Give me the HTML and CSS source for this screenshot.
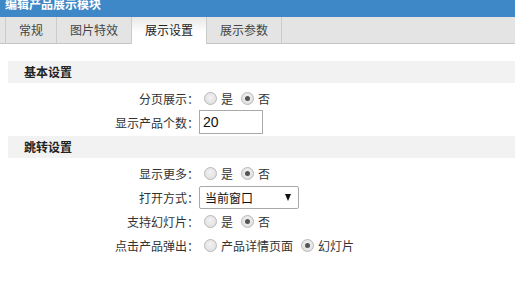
FILE: index.html
```html
<!DOCTYPE html>
<html lang="zh">
<head>
<meta charset="utf-8">
<link rel="stylesheet" href="styles.css">
</head>
<body>
<div class="titlebar"><div class="title">编辑产品展示模块</div></div>
<div class="tabs">
  <div class="tab">常规</div>
  <div class="tab">图片特效</div>
  <div class="tab active">展示设置</div>
  <div class="tab last">展示参数</div>
</div>
<div class="content">
  <div class="sec">基本设置</div>
  <div class="rows">
    <div class="row">
      <div class="label">分页展示：</div>
      <div class="field">
        <span class="radio"></span><span class="opt">是</span>
        <span class="radio on"></span><span class="opt">否</span>
      </div>
    </div>
    <div class="row">
      <div class="label">显示产品个数：</div>
      <div class="field"><div class="input">20</div></div>
    </div>
  </div>
  <div class="sec">跳转设置</div>
  <div class="rows">
    <div class="row">
      <div class="label">显示更多：</div>
      <div class="field">
        <span class="radio"></span><span class="opt">是</span>
        <span class="radio on"></span><span class="opt">否</span>
      </div>
    </div>
    <div class="row">
      <div class="label">打开方式：</div>
      <div class="field"><div class="select"><span>当前窗口</span><span class="arrow"></span></div></div>
    </div>
    <div class="row">
      <div class="label">支持幻灯片：</div>
      <div class="field">
        <span class="radio"></span><span class="opt">是</span>
        <span class="radio on"></span><span class="opt">否</span>
      </div>
    </div>
    <div class="row">
      <div class="label">点击产品弹出：</div>
      <div class="field">
        <span class="radio"></span><span class="opt">产品详情页面</span>
        <span class="radio on"></span><span class="opt">幻灯片</span>
      </div>
    </div>
  </div>
</div>
</body>
</html>
```
FILE: styles.css
```css
* { box-sizing: border-box; }
body {
  margin: 0;
  font-family: "Noto Sans CJK SC", "Microsoft YaHei", sans-serif;
  font-size: 12px;
  color: #333;
  background: #fff;
}
.titlebar {
  height: 17px;
  background: #3f88c7;
  overflow: hidden;
}
.title {
  margin-top: -6px;
  padding-left: 5px;
  line-height: 20px;
  color: #fff;
  font-weight: bold;
  font-size: 12px;
}
.tabs {
  display: flex;
  height: 27px;
  background: #e4e4e4;
  border-bottom: 1px solid #c6c6c6;
  padding-left: 5px;
}
.tab {
  height: 26px;
  line-height: 26px;
  padding: 0 13px;
  border-left: 1px solid #cbcbcb;
  color: #444;
  font-size: 12px;
}
.tab.last { border-right: 1px solid #cbcbcb; }
.tab.active {
  height: 27px;
  background: linear-gradient(#e8e8e8, #ffffff 60%);
  color: #222;
}
.content { padding-top: 17px; }
.sec {
  margin-left: 8px;
  height: 22px;
  line-height: 22px;
  padding-left: 16px;
  background: #f2f2f2;
  font-weight: bold;
  color: #222;
}
.rows { padding: 3px 0 2px; }
.row {
  display: flex;
  align-items: center;
  height: 24px;
}
.label {
  width: 199px;
  text-align: right;
  color: #333;
}
.field {
  display: flex;
  align-items: center;
}
.radio {
  width: 13px;
  height: 13px;
  border-radius: 50%;
  border: 1px solid #b8b8b8;
  background: radial-gradient(circle at 50% 40%, #f2f2f2, #dcdcdc);
  margin: 0 4px 0 5px;
  display: inline-flex;
  align-items: center;
  justify-content: center;
}
.radio.on::after {
  content: "";
  width: 5px;
  height: 5px;
  border-radius: 50%;
  background: #555;
}
.opt { margin-right: 3px; }
.input {
  width: 64px;
  height: 24px;
  border: 1px solid #a9a9a9;
  padding-left: 3px;
  line-height: 22px;
  font-family: "Liberation Sans", Arial, sans-serif;
  font-size: 14px;
  color: #111;
}
.select {
  width: 100px;
  height: 23px;
  border: 1px solid #a9a9a9;
  border-radius: 2px;
  display: flex;
  align-items: center;
  justify-content: space-between;
  padding: 0 7px 0 5px;
  color: #111;
}
.arrow {
  width: 0;
  height: 0;
  border-left: 3.5px solid transparent;
  border-right: 3.5px solid transparent;
  border-top: 7px solid #111;
}
```
